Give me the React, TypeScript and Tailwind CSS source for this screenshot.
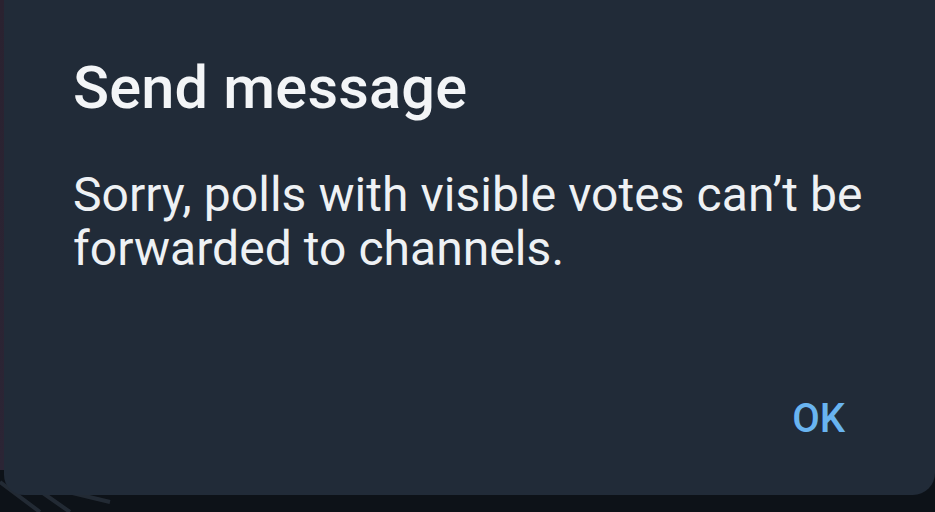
import React from "react";

export default function App() {
  return (
    <div className="relative w-[935px] h-[512px] overflow-hidden bg-[#0d1218]" style={{ fontFamily: "Roboto, 'Noto Sans', sans-serif" }}>
      <div className="absolute left-0 top-0 w-[6px] h-[470px] bg-gradient-to-b from-[#2a2230] to-[#2b2535]" />
      <svg className="absolute left-0 bottom-0" width="180" height="40" viewBox="0 0 180 40">
        <path d="M0 10 L40 40 M20 5 L70 40 M60 18 L110 30" stroke="#2c3540" strokeWidth="4" fill="none" opacity="0.7" />
      </svg>
      <div className="relative ml-[4px] h-[495px] bg-[#212b38] rounded-bl-[20px] rounded-br-[22px] flex flex-col pl-[69px] pr-[20px]">
        <div className="mt-[59px] text-[59.5px] leading-[59px] font-medium text-[#f3f5f7] tracking-[0.2px] whitespace-nowrap">Send message</div>
        <div className="mt-[50px] text-[48px] leading-[54px] text-[#eef1f4] tracking-[0.05px] whitespace-nowrap">
          Sorry, polls with visible votes can’t be<br />forwarded to channels.
        </div>
        <div className="flex-1" />
        <div className="flex justify-end pr-[70px] mb-[56px]">
          <span className="text-[40px] leading-[40px] font-medium text-[#69b4f0]">OK</span>
        </div>
      </div>
    </div>
  );
}
